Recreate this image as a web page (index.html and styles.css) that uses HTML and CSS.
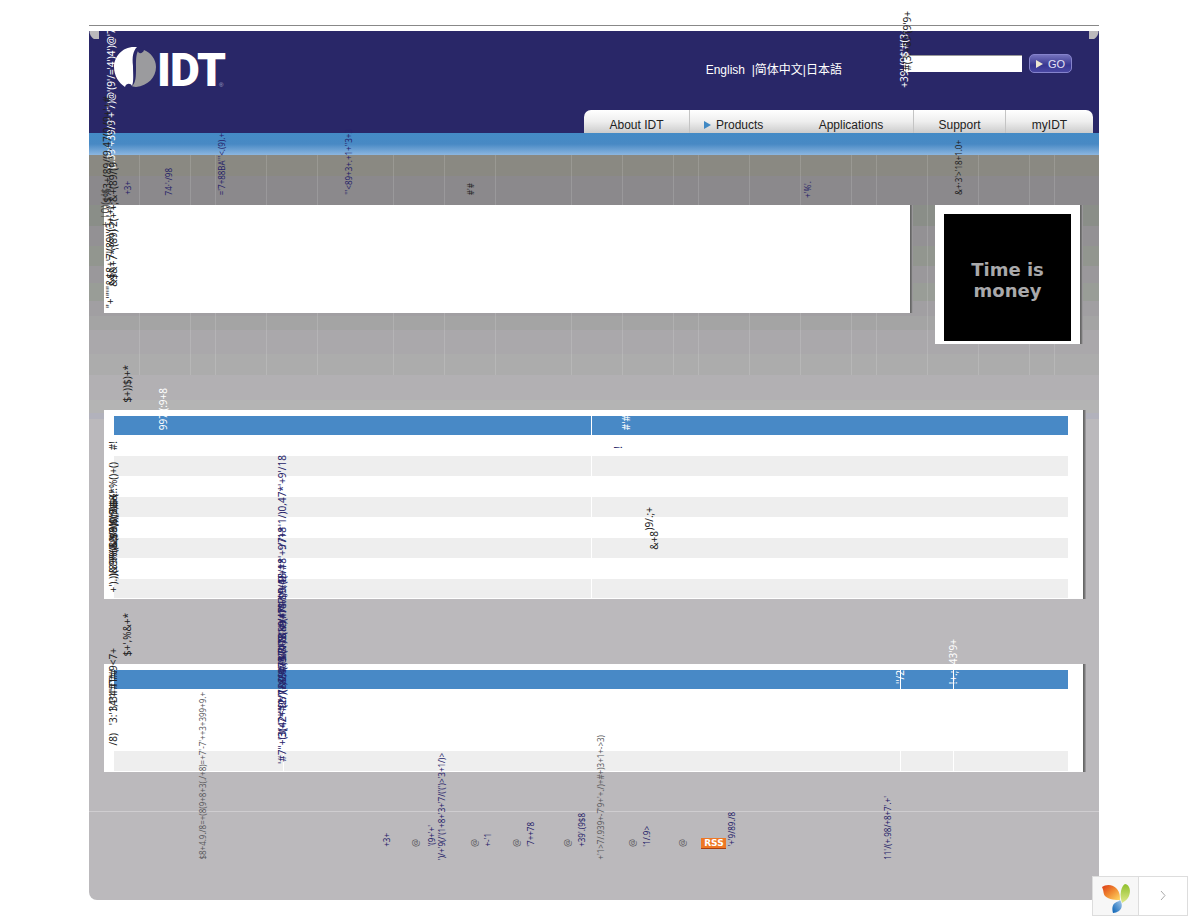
FILE: index.html
```html
<!DOCTYPE html>
<html lang="en">
<head>
<meta charset="utf-8">
<title>IDT</title>
<link rel="stylesheet" href="styles.css">
</head>
<body>
<div class="page">
  <header class="header">
    <svg class="logo" viewBox="0 0 114 46" role="img" aria-label="IDT">
      <path d="M21 1C9 1 1 11 1 21c0 9 5 16 11 20 1-4 6-4 7-1 2-5 1-12 1-20C19 11 20 5 24 1z" fill="#fff"/>
      <path d="M25 5c0 3 5 3 6-1 7 3 12 9 12 17 0 10-8 19-20 20-3 0-4-1-4-1 4-3 4-10 4-19 0-8 0-12 2-16z" fill="#9b9b9e"/>
      <text class="logo-text" y="40"><tspan x="44">I</tspan><tspan x="57">D</tspan><tspan x="84">T</tspan></text>
      <text class="logo-mark" x="106" y="41">®</text>
    </svg>
    <nav class="languages"><a href="#">English</a> &nbsp;|<a href="#">简体中文</a>|<a href="#">日本語</a></nav>
    <form class="search">
      <input type="text" aria-label="Search">
      <button type="button"><svg viewBox="0 0 7 8" width="7" height="8"><path d="M0 0l7 4-7 4z" fill="#eee6d0"/></svg>GO</button>
    </form>
    <nav class="tabs">
      <a href="#">About IDT</a>
      <a class="current" href="#"><svg viewBox="0 0 7 8" width="7" height="8"><path d="M0 0l7 4-7 4z" fill="#4189c4"/></svg>Products</a>
      <a href="#">Applications</a>
      <a href="#">Support</a>
      <a href="#">myIDT</a>
    </nav>
    <span class="v over white head-a">(;:39'+39/9'+'7)@'(9'/='4')4')@'7'</span>
    <span class="v over head-b">$%3+(89/(9,47(0.(9+'+#</span>
    <span class="v over white head-c">+39'.(9$'#(3+;+89)'</span>
    <span class="v over head-d">'#(3:+89'(9'9+</span>
  </header>
  <div class="bar"></div>
  <main class="main">
    <nav class="crumbs">
      <a class="v" href="#">+3+</a>
      <a class="v" href="#">74·'·/98</a>
      <a class="v" href="#">='7+88BA'"&lt;.(9).+</a>
      <a class="v" href="#">'"&lt;89+3+.+1+''3+3</a>
      <span class="v">#'#</span>
      <a class="v low" href="#">+'%'.</a>
      <span class="v">&amp;+·3'&gt;'18+1.0+</span>
    </nav>
    <div class="intro">
      <section class="card summary">
        <span class="v over sum-a">"+'"'"&amp;$8+'7'(89)'(3+'+(</span>
        <span class="v over sum-b">&amp;$&amp;+7*;(89)'2(+'+;&amp;+(89/(9</span>
        <span class="v over sum-c">+ |0)(+'$</span>
      </section>
      <aside class="card ad"><p>Time is<br>money</p></aside>
    </div>

    <h2 class="heading"><span class="v">$+))$)+*</span></h2>
    <section class="card panel">
      <table class="grid two">
        <thead><tr><th scope="col"><span class="v over t1-h1">997'(:9+8</span></th><th scope="col"><span class="v over t1-h2">#'#</span></th></tr></thead>
        <tbody>
          <tr><td></td><td></td></tr><tr><td></td><td></td></tr>
          <tr><td></td><td></td></tr><tr><td></td><td></td></tr>
          <tr><td></td><td></td></tr><tr><td></td><td></td></tr>
          <tr><td></td><td></td></tr><tr><td></td><td></td></tr>
        </tbody>
      </table>
      <span class="v over key k1">#!</span>
      <span class="v over key k2">+').))(89%(&amp;$%)));8$+(</span>
      <span class="v over key k3">.)&amp;9/%&amp;($9)0);&amp;$+!.%()+()</span>
      <span class="v over key k4">%(&amp;9/8($(9)$&amp;*</span>
      <a class="v over dash" href="#">!</a>
      <span class="v over w1">&amp;+8</span>
      <span class="v over w2">)9/.;+</span>
      <a class="v over link l1" href="#">:/7+*'1/)0,47*'+9'/18</a>
      <a class="v over link l2" href="#">'#/+*'1/)0,4(+#*'+9'/18</a>
      <a class="v over link l3" href="#">'3/7+8'1/)(*/47'*+(9'/18</a>
    </section>

    <h2 class="heading"><span class="v">$+',%&amp;+*</span></h2>
    <section class="card panel">
      <table class="grid four">
        <thead><tr><th scope="col"></th><th scope="col"></th><th scope="col"><span class="v over t2-h">''/2</span></th><th scope="col"><span class="v over t2-h">!+.;·/43'9+</span></th></tr></thead>
        <tbody>
          <tr class="tall"><td></td><td></td><td></td><td></td></tr>
          <tr><td></td><td></td><td></td><td></td></tr>
        </tbody>
      </table>
      <span class="v over key k5">/8)</span>
      <span class="v over key k6">'3:'1,'34'T'#.9&lt;7+</span>
      <span class="v over key k7">34'1'#T'#</span>
      <a class="v over link m1" href="#">'#7''+(3(42+'9*'1/)0,47*</a>
      <a class="v over link m2" href="#">'3(+7*''(1/)(8+9#/47'/18</a>
      <a class="v over link m3" href="#">'#2/7+&amp;'1/)%(47&amp;+9'/18</a>
      <a class="v over link m4" href="#">'%(+3'8/)9(&amp;+47'+$9/18</a>
    </section>

    <footer class="footer">
      <span class="v deep">$8+4.9./8=+(8(9+8+3(./+8)=+7'-7'++3+399+9.+</span>
      <a class="v" href="#">+3+</a>
      <span class="v at">@</span>
      <a class="v" href="#">'(9+'+'</a>
      <a class="v deep" href="#">')/+'9(/'(1+8+'3+'7/('(')&gt;'3+1/)&gt;</a>
      <span class="v at">@</span>
      <a class="v" href="#">+-'1</a>
      <span class="v at">@</span>
      <a class="v" href="#">'7++78</a>
      <span class="v at">@</span>
      <a class="v" href="#">+39'.(9$8</a>
      <span class="v deep">+'1&gt;7/.939+-7'9+'+./)+#+)3+1+-&gt;3)</span>
      <span class="v at">@</span>
      <a class="v" href="#">'1/.9&gt;</a>
      <span class="v at">@</span>
      <a class="rss" href="#">RSS</a>
      <a class="v" href="#">'+'9/89./8</a>
      <a class="v deep" href="#">11'/(+.98/+8+7'.+'</a>
    </footer>
  </main>
</div>
<div class="widget">
  <span class="brand"><svg viewBox="0 0 30 31" width="30" height="31" aria-hidden="true">
    <defs>
      <linearGradient id="o" x1="0" y1="0" x2="1" y2="1"><stop offset="0" stop-color="#dc3a17"/><stop offset=".5" stop-color="#f08a32"/><stop offset="1" stop-color="#ffd966"/></linearGradient>
      <linearGradient id="g" x1="0" y1="0" x2="0" y2="1"><stop offset="0" stop-color="#8fbf2c"/><stop offset="1" stop-color="#dfe98a"/></linearGradient>
      <linearGradient id="b" x1="1" y1="0" x2="0" y2="1"><stop offset="0" stop-color="#a8cbec"/><stop offset="1" stop-color="#0560b4"/></linearGradient>
    </defs>
    <path d="M1 4C5 1 12 1 16 6c3 4 3 7 3 11-4 0-11 0-15-4C2 10 3 8 1 4z" fill="url(#o)"/>
    <path d="M24 1c5 1 6 7 4 12-1 3-4 5-7 7-1-4-2-7-1-12 1-4 2-6 4-7z" fill="url(#g)"/>
    <path d="M19 17c3 4 2 9-1 11-2 1-4 2-6 2-1-4-1-8 2-10 2-2 4-1 5-3z" fill="url(#b)"/>
  </svg></span>
  <button type="button" aria-label="Next"><svg viewBox="0 0 6 11" width="6" height="11"><path d="M1 1l4 4.500-4 4.500" fill="none" stroke="#aaa"/></svg></button>
</div>
</body>
</html>
```
FILE: styles.css
```css
* { box-sizing: border-box; }
body { margin: 0; background: #fff; font: 10px/12px "Noto Sans", sans-serif; color: #222; }
a { color: #262369; text-decoration: none; }
.page { max-width: 1010px; margin: 25px auto 18px; border-top: 1px solid #888; padding-top: 5px; }

/* Captions that read from bottom to top */
.v { writing-mode: vertical-rl; transform: rotate(180deg); white-space: nowrap; line-height: 12px; }
.over { position: absolute; z-index: 1; font-weight: 400; }
.white { color: #fff; }

.header {
  position: relative;
  display: grid;
  grid-template-columns: 1fr auto auto;
  grid-template-rows: 79px 23px;
  background:
    radial-gradient(circle at 100% 0, #bbb9bc 9px, transparent 10px) 0 0 / 10px 8px no-repeat,
    radial-gradient(circle at 0 0, #bbb9bc 9px, transparent 10px) 100% 0 / 10px 8px no-repeat,
    #292768;
}
.logo { width: 114px; height: 46px; margin: 15px 0 0 24px; }
.logo-text { font: 900 46px Roboto, sans-serif; fill: #fff; }
.logo-mark { font: 6px "Liberation Sans", sans-serif; fill: #a9a9c8; }
.languages { margin: 32px 62px 0 0; font: 12px/14px "Liberation Sans", "Noto Sans CJK SC", sans-serif; color: #fff; }
.languages a { color: #fff; }
.search { display: flex; gap: 7px; margin: 24px 27px 0 0; align-items: flex-start; }
.search input { width: 118px; height: 17px; border: 0; border-top: 1px solid #999; padding: 0 2px; background: #fff; border-radius: 0; }
.search button {
  display: flex; align-items: center; justify-content: center; gap: 5px;
  width: 43px; height: 19px; margin-top: -1px; padding: 0;
  border: 1px solid #8583cc; border-radius: 5px;
  background: linear-gradient(#7472bd, #383690 60%, #4a48a4);
  color: #e4e2f4; font: 11px "Liberation Sans", sans-serif;
}
.tabs {
  grid-column: 1 / -1; justify-self: end;
  display: grid; grid-template-columns: 105px 100px 124px 92px 88px;
  margin-right: 6px; border-radius: 7px 7px 0 0; overflow: hidden;
  background: linear-gradient(#fff, #eee 50%, #ccc);
}
.tabs a {
  display: flex; align-items: center; justify-content: center; gap: 5px; padding-top: 6px;
  color: #222; font: 12px/14px "Liberation Sans", sans-serif; border-left: 1px solid #c4c4c4;
}
.tabs a:first-child, .tabs a:nth-child(3) { border-left: 0; }
.tabs .current { justify-content: flex-start; padding-left: 14px; }
.head-a { left: 16px; bottom: -36px; }
.head-b { left: 12px; bottom: -70px; }
.head-c { left: 809px; bottom: 45px; }
.head-d { left: 812px; bottom: 60px; }

.bar { height: 22px; background: linear-gradient(#448bc6, #4889c4 50%, #8cb6e0); }

.main {
  border-radius: 0 0 8px 8px;
  background:
    linear-gradient(90deg,
      transparent 50px, #fff2 50px 51px, transparent 51px 101px, #fff2 101px 102px, transparent 102px 126px,
      #fff2 126px 127px, transparent 127px 177px, #fff2 177px 178px, transparent 178px 228px, #fff2 228px 229px,
      transparent 229px 304px, #fff2 304px 305px, transparent 305px 355px, #fff2 355px 356px, transparent 356px 406px,
      #fff2 406px 407px, transparent 407px 482px, #fff2 482px 483px, transparent 483px 533px, #fff2 533px 534px,
      transparent 534px 584px, #fff2 584px 585px, transparent 585px 609px, #fff2 609px 610px, transparent 610px 660px,
      #fff2 660px 661px, transparent 661px 711px, #fff2 711px 712px, transparent 712px 762px, #fff2 762px 763px,
      transparent 763px 787px, #fff2 787px 788px, transparent 788px 838px, #fff2 838px 839px, transparent 839px 889px,
      #fff2 889px 890px, transparent 890px 940px, #fff2 940px 941px, transparent 941px 965px, #fff2 965px 966px,
      transparent 966px) 0 0 / 100% 220px no-repeat,
    linear-gradient(#8a8982 21px, #8b898c 21px 50px, #8a8e88 50px 71px, #939194 71px 91px, #92968f 91px 111px,
      #9a989b 111px 128px, #999d97 128px 146px, #a19fa2 146px 161px, #a4a4a4 161px 175px, #aaa8ab 175px 199px,
      #acacac 199px 220px, #b2b0b3 220px 245px, #b4b4b4 245px 258px, #b2b2bc 258px 264px, #bbb9bc 264px);
}
.crumbs {
  display: grid; grid-template-columns: 41fr 53fr 127fr 122fr 337fr 151fr 146fr; grid-template-rows: 40px;
  height: 50px; padding: 0 0 10px 33px; align-items: end; justify-items: start; font-size: 8px;
}
.crumbs .low { margin-bottom: -3px; }

.card { position: relative; background: #fff; box-shadow: 1px 0 #666, 2px 0 #777, 3px 0 #99979a; }
.intro { display: grid; grid-template-columns: 1fr 145px; gap: 25px; align-items: start; margin: 0 19px 0 15px; padding-bottom: 1px; }
.summary { height: 108px; }
.sum-a { left: 0; bottom: 5px; }
.sum-b { left: 3px; bottom: 26px; }
.sum-c { left: -5px; bottom: 86px; color: #444; }
.ad { padding: 9px 9px 3px; }
.ad p {
  display: grid; place-content: center; aspect-ratio: 1; margin: 0; padding-top: 4px;
  background: #000; color: #a9a9ab; text-align: center; font: 800 18px/21px "DejaVu Sans", sans-serif;
}

.heading { display: flex; align-items: flex-end; height: 65px; margin: 0; padding: 0 0 8px 32px; font-size: 10px; font-weight: 400; }
.panel { margin: 0 16px 0 15px; padding: 6px 15px 1px 10px; }
.grid { width: 100%; border-collapse: collapse; table-layout: fixed; }
.grid th { position: relative; height: 19px; padding: 0; background: #4889c6; color: #fff; }
.grid td { height: 21px; padding: 0; }
.grid tr:nth-child(even) td { height: 20px; background: #eee; }
.grid.two tr:last-child td { height: 19px; }
.grid .tall td { height: 62px; }
.grid th + th, .grid td + td { border-left: 1px solid #fff; }
.two th { width: 50%; }
.four th:nth-child(1) { width: 169px; }
.four th:nth-child(3) { width: 53px; }
.four th:nth-child(4) { width: 115px; }
.four th:nth-child(2) { border-left: 0; }
.t1-h1 { left: 43px; bottom: 5px; }
.t1-h2 { left: 28px; bottom: 5px; }
.t2-h { left: -7px; bottom: 5px; }

.key { left: 3px; }
.k1 { bottom: 149px; }
.k2 { bottom: 6px; }
.k3 { bottom: 20px; }
.k4 { bottom: 38px; }
.dash { left: 508px; bottom: 150px; }
.w1 { left: 544px; bottom: 49px; }
.w2 { left: 539px; bottom: 68px; }
.link { left: 172px; }
.l1 { bottom: 50px; }
.l2 { bottom: -32px; }
.l3 { bottom: -66px; }
.k5 { bottom: 27px; }
.k6 { bottom: 47px; }
.k7 { bottom: 61px; }
.m1 { bottom: 8px; }
.m2 { bottom: 32px; }
.m3 { bottom: 58px; }
.m4 { bottom: 92px; }

.footer {
  display: grid;
  grid-template-columns: 186fr 29fr 16fr 10fr 33fr 14fr 29fr 14fr 37fr 14fr 20fr 32fr 14fr 36fr 22fr 20fr 157fr 219fr;
  grid-template-rows: 35px;
  height: 89px; margin-top: 39px; padding: 0 0 53px 108px;
  border-top: 1px solid #cfcdd0; align-items: end; justify-items: start; color: #5c5b5e; font-size: 8px;
}
.footer > * { min-width: 0; }
.footer .deep { margin-bottom: -13px; }
.footer .at { font-size: 9px; }
.rss {
  width: 25px; height: 11px; margin: 0 0 -2px 3px; background: #ee7724;
  border-bottom: 1px solid #a84012; color: #fff; text-align: center; font: bold 9px/10px "DejaVu Sans", sans-serif;
}

.widget { position: fixed; right: 0; bottom: 2px; z-index: 2; display: flex; width: 96px; height: 40px; border: 1px solid #ddd; background: #fff; }
.brand { display: grid; place-content: center; width: 46px; background: #f7f7f7; border-right: 1px solid #ddd; padding-top: 5px; }
.widget button { flex: 1; border: 0; padding: 0; background: #fff; }
```
